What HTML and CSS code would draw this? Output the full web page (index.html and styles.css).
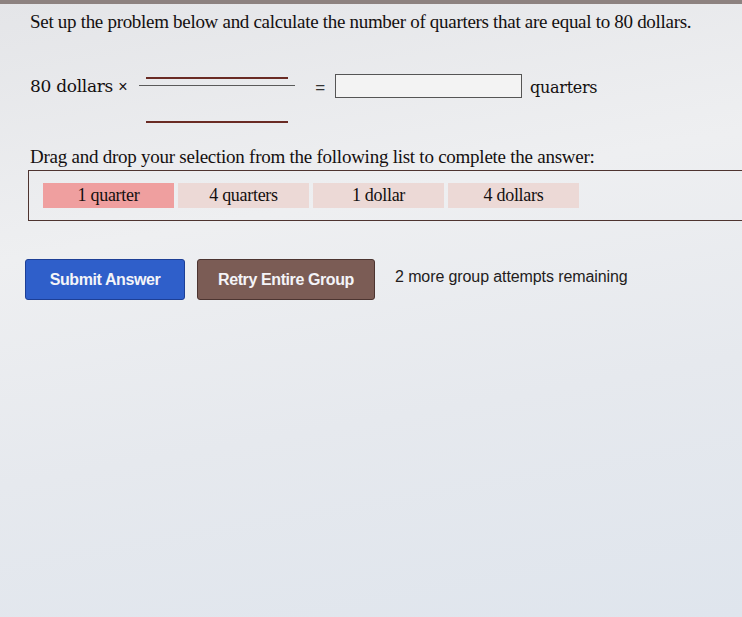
FILE: index.html
```html
<!DOCTYPE html>
<html>
<head>
<meta charset="utf-8">
<link rel="stylesheet" href="styles.css">
</head>
<body>
<div class="topbar"></div>
<div class="page">
  <p class="prompt">Set up the problem below and calculate the number of quarters that are equal to 80 dollars.</p>
  <div class="equation">
    <span class="label">80 dollars <span class="times">×</span></span>
    <div class="fraction">
      <div class="slot"></div>
      <div class="bar"></div>
      <div class="slot denom"></div>
    </div>
    <span class="equals">=</span>
    <div class="answer"></div>
    <span class="unit">quarters</span>
  </div>
  <p class="instr">Drag and drop your selection from the following list to complete the answer:</p>
  <div class="bank">
    <div class="chip active">1 quarter</div>
    <div class="chip">4 quarters</div>
    <div class="chip">1 dollar</div>
    <div class="chip">4 dollars</div>
  </div>
  <div class="actions">
    <button class="btn submit">Submit Answer</button>
    <button class="btn retry">Retry Entire Group</button>
    <span class="attempts">2 more group attempts remaining</span>
  </div>
</div>
</body>
</html>
```
FILE: styles.css
```css
html, body {
  margin: 0;
  padding: 0;
}
body {
  width: 742px;
  height: 617px;
  overflow: hidden;
  background: linear-gradient(170deg, #e4e5e8 0%, #eeeff1 35%, #e6e9ee 65%, #dfe5ed 100%);
  font-family: "Liberation Serif", "Times New Roman", serif;
  color: #141010;
}
.topbar {
  height: 4px;
  background: #8d8280;
}
.page {
  padding-left: 30px;
}
.prompt {
  margin: 7px 0 0 0;
  font-size: 19px;
  line-height: 22px;
  letter-spacing: -0.3px;
}
.equation {
  display: flex;
  align-items: flex-start;
  margin-top: 41px;
}
.label {
  line-height: 24px;
  font-family: "DejaVu Serif", serif;
  font-size: 17px;
  letter-spacing: -0.3px;
}
.times {
  font-family: "Liberation Sans", sans-serif;
  font-size: 16px;
}
.fraction {
  display: flex;
  flex-direction: column;
  width: 156px;
  margin-left: 12px;
  padding-top: 3px;
}
.slot {
  height: 2px;
  margin: 0 7px;
  background: #6a2b24;
}
.bar {
  height: 1px;
  margin-top: 6px;
  background: #5a5a5a;
}
.slot.denom {
  margin-top: 35px;
}
.equals {
  font-family: "Liberation Sans", sans-serif;
  font-size: 17px;
  line-height: 28px;
  margin-left: 20px;
  color: #333;
}
.answer {
  width: 185px;
  height: 22px;
  margin-left: 10px;
  border: 1px solid #555;
  background: #f3f3f3;
}
.unit {
  font-family: "DejaVu Serif", serif;
  font-size: 16px;
  letter-spacing: -0.3px;
  line-height: 28px;
  margin-left: 8px;
}
.instr {
  margin: 23px 0 0 0;
  font-size: 19px;
  line-height: 22px;
  letter-spacing: -0.25px;
}
.bank {
  display: flex;
  gap: 4px;
  margin: 2px 0 0 -2px;
  padding: 12px 0 12px 14px;
  border: 1px solid #4e3430;
  border-right: none;
  height: 25px;
}
.chip {
  width: 131px;
  height: 25px;
  line-height: 25px;
  text-align: center;
  font-size: 18px;
  letter-spacing: -0.3px;
  background: #ecd9d6;
}
.chip.active {
  background: #ef9f9f;
}
.actions {
  display: flex;
  align-items: center;
  margin: 38px 0 0 -5px;
}
.btn {
  height: 41px;
  border-radius: 3px;
  color: #f4f4f8;
  font-family: "Liberation Sans", Arial, sans-serif;
  font-weight: bold;
  font-size: 16px;
  letter-spacing: -0.4px;
  padding: 0;
}
.submit {
  width: 160px;
  background: #2f5fca;
  border: 1px solid #1d3f96;
}
.retry {
  width: 178px;
  margin-left: 12px;
  background: #7b5c55;
  border: 1px solid #4c3430;
}
.attempts {
  margin-left: 20px;
  margin-top: -6px;
  font-family: "Liberation Sans", Arial, sans-serif;
  font-size: 16px;
  letter-spacing: -0.1px;
  color: #231c1c;
}
```
